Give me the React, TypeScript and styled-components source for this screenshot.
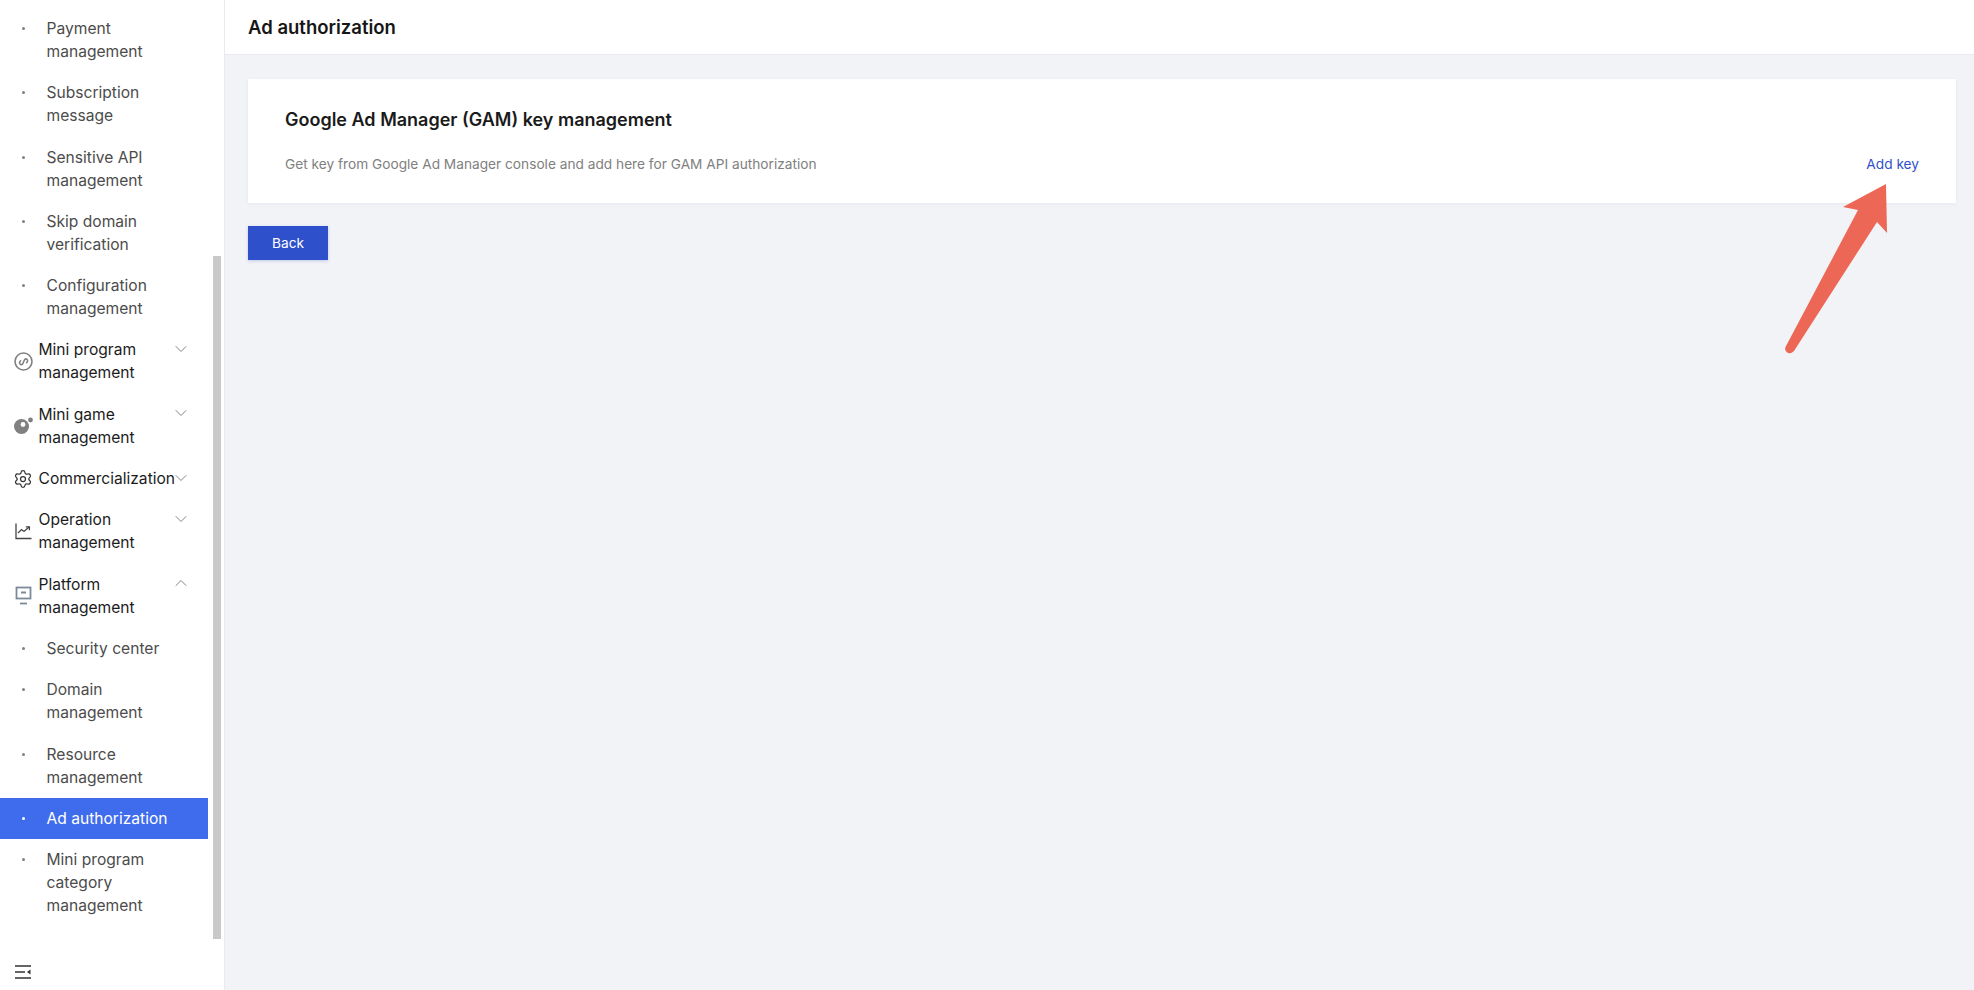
import React from "react";
import styled, { createGlobalStyle } from "styled-components";
import { ChevronDown, ChevronUp, Settings } from "lucide-react";

const GlobalStyle = createGlobalStyle`
    html, body {
        margin: 0;
        height: 100%;
        background: #f2f3f7;
        font-family: Inter, "Liberation Sans", sans-serif;
    }
`;

const Page = styled.div`
    display: flex;
    height: 990px;
    overflow: hidden;
    position: relative;
`;

const Sidebar = styled.aside`
    position: relative;
    display: flex;
    flex-direction: column;
    flex-shrink: 0;
    box-sizing: border-box;
    width: 225px;
    height: 100%;
    background: #fff;
    border-right: 1px solid #e9ebef;
`;

const NavList = styled.nav`
    flex: 1;
    width: 208px;
    padding-top: 8px;
`;

const ScrollThumb = styled.div`
    position: absolute;
    top: 256px;
    left: 213px;
    width: 8px;
    height: 683px;
    background: #c9c9c9;
`;

const ParentRow = styled.div`
    display: flex;
    align-items: center;
    padding: 9px 0 9.3px 13px;
    font-size: 15.6px;
    line-height: 23px;
    color: #1c1c1c;
`;

const IconSlot = styled.span`
    display: flex;
    justify-content: center;
    flex-shrink: 0;
    width: 20px;
    margin-right: 5.5px;
    color: #777;
`;

const ParentLabel = styled.span`
    flex-shrink: 0;
    width: 136px;
`;

const Caret = styled.span`
    display: flex;
    align-self: flex-start;
    align-items: center;
    justify-content: center;
    width: 12px;
    height: 23px;
    margin-top: -1px;
    color: #858585;

    svg {
        flex-shrink: 0;
    }
`;

const ChildRow = styled.a<{ $active?: boolean }>`
    display: flex;
    align-items: flex-start;
    padding: 9px 0 9.3px 22px;
    font-size: 15.6px;
    line-height: 23px;
    color: ${(p) => (p.$active ? "#fff" : "#4c4c4c")};
    background: ${(p) => (p.$active ? "#3e6cec" : "transparent")};
`;

const Dot = styled.i<{ $active?: boolean }>`
    flex-shrink: 0;
    width: 3px;
    height: 3px;
    margin: 10px 21.5px 0 0;
    border-radius: 50%;
    background: ${(p) => (p.$active ? "#fff" : "#808080")};
`;

const ChildLabel = styled.span`
    width: 140px;
`;

const Collapse = styled.div`
    display: flex;
    align-items: center;
    height: 36px;
    padding-left: 15px;
    color: #333;
`;

const Main = styled.main`
    flex: 1;
    min-width: 0;
`;

const Header = styled.header`
    display: flex;
    align-items: center;
    box-sizing: border-box;
    height: 55px;
    padding: 0 23px;
    background: #fff;
    border-bottom: 1px solid #e9ebef;
`;

const PageTitle = styled.h1`
    margin: 0;
    font-size: 18.5px;
    font-weight: 600;
    color: #161616;
`;

const Content = styled.div`
    padding: 24px 18px 0 23px;
`;

const Card = styled.section`
    box-sizing: border-box;
    height: 124px;
    padding: 30px 37px 0;
    background: #fff;
    box-shadow: 0 1px 4px rgba(40, 50, 80, 0.06);
`;

const CardTitle = styled.h2`
    margin: 0;
    font-size: 18px;
    line-height: 22px;
    font-weight: 600;
    color: #1a1a1a;
`;

const CardRow = styled.div`
    display: flex;
    justify-content: space-between;
    align-items: center;
    margin-top: 23px;
    font-size: 13.7px;
    line-height: 20px;
`;

const Description = styled.span`
    color: #808080;
`;

const AddKey = styled.a`
    color: #2f50cb;
`;

const BackButton = styled.button`
    display: block;
    width: 80px;
    height: 34px;
    margin-top: 23px;
    padding: 0;
    border: 0;
    background: #2f50cb;
    color: #fff;
    font-family: inherit;
    font-size: 13.7px;
    box-shadow: 0 1px 3px rgba(47, 80, 203, 0.25);
`;

const ArrowMark = styled.svg`
    position: absolute;
    top: 0;
    left: 0;
    pointer-events: none;
`;

const MiniProgramIcon = () => (
    <svg width="19" height="19" viewBox="0 0 19 19" fill="none" stroke="#808080">
        <circle cx="9.5" cy="9.5" r="8.5" strokeWidth="1.6" />
        <path d="M6.6 8.8l-.7.9c-1.2 1.8 1 3.8 2.7 2.4l2.1-4.6c1.5-1.6 3.8.5 2.6 2.3l-.7.9" strokeWidth="1.5" strokeLinecap="round" />
    </svg>
);

const MiniGameIcon = () => (
    <svg width="20" height="19" viewBox="0 0 20 19">
        <circle cx="8.5" cy="10.5" r="7.5" fill="#808080" />
        <circle cx="10" cy="8.5" r="2.4" fill="#fff" />
        <circle cx="17.5" cy="4" r="2.4" fill="#808080" />
    </svg>
);

const ChartIcon = () => (
    <svg width="17" height="17" viewBox="0 0 17 17" fill="none" stroke="#444" strokeWidth="1.3">
        <path d="M1 .5V15.5h15.5" />
        <path d="M3 10l3.5-3.5 2.5 2L14 4" />
        <path d="M10.8 3.8h3.6v3.4" />
    </svg>
);

const PlatformIcon = () => (
    <svg width="17" height="19" viewBox="0 0 17 19" fill="none" stroke="#7d8a99" strokeWidth="1.8">
        <rect x="1.5" y="1.5" width="14" height="11" />
        <path d="M6 6.5h5" strokeWidth="2" />
        <path d="M5 17.5h7" />
    </svg>
);

const CollapseIcon = () => (
    <svg width="16" height="14" viewBox="0 0 16 14" fill="none" stroke="#333" strokeWidth="1.4">
        <path d="M0 1h16M0 7h10M0 13h16" />
        <path d="M15.5 4.5v5L12 7z" fill="#333" stroke="none" />
    </svg>
);

type ParentItem = {
    kind: "parent";
    label: string;
    icon: React.ReactNode;
    open?: boolean;
};

type ChildItem = {
    kind: "child";
    label: string;
    active?: boolean;
};

const menu: (ParentItem | ChildItem)[] = [
    { kind: "child", label: "Payment management" },
    { kind: "child", label: "Subscription message" },
    { kind: "child", label: "Sensitive API management" },
    { kind: "child", label: "Skip domain verification" },
    { kind: "child", label: "Configuration management" },
    { kind: "parent", label: "Mini program management", icon: <MiniProgramIcon /> },
    { kind: "parent", label: "Mini game management", icon: <MiniGameIcon /> },
    { kind: "parent", label: "Commercialization", icon: <Settings size={20} strokeWidth={1.5} color="#333" /> },
    { kind: "parent", label: "Operation management", icon: <ChartIcon /> },
    { kind: "parent", label: "Platform management", icon: <PlatformIcon />, open: true },
    { kind: "child", label: "Security center" },
    { kind: "child", label: "Domain management" },
    { kind: "child", label: "Resource management" },
    { kind: "child", label: "Ad authorization", active: true },
    { kind: "child", label: "Mini program category management" },
];

export default function App() {
    return (
        <Page>
            <GlobalStyle />
            <Sidebar>
                <NavList>
                    {menu.map((item) =>
                        item.kind === "parent" ? (
                            <ParentRow key={item.label}>
                                <IconSlot>{item.icon}</IconSlot>
                                <ParentLabel>{item.label}</ParentLabel>
                                <Caret>
                                    {item.open
                                        ? <ChevronUp size={20} strokeWidth={1.2} />
                                        : <ChevronDown size={20} strokeWidth={1.2} />}
                                </Caret>
                            </ParentRow>
                        ) : (
                            <ChildRow key={item.label} $active={item.active}>
                                <Dot $active={item.active} />
                                <ChildLabel>{item.label}</ChildLabel>
                            </ChildRow>
                        )
                    )}
                </NavList>
                <Collapse>
                    <CollapseIcon />
                </Collapse>
                <ScrollThumb />
            </Sidebar>
            <Main>
                <Header>
                    <PageTitle>Ad authorization</PageTitle>
                </Header>
                <Content>
                    <Card>
                        <CardTitle>Google Ad Manager (GAM) key management</CardTitle>
                        <CardRow>
                            <Description>Get key from Google Ad Manager console and add here for GAM API authorization</Description>
                            <AddKey>Add key</AddKey>
                        </CardRow>
                    </Card>
                    <BackButton>Back</BackButton>
                </Content>
            </Main>
            <ArrowMark width="1974" height="990" viewBox="0 0 1974 990">
                <path
                    d="M1886 184L1843 207L1858 210L1785.5 347Q1784 351 1788 353Q1791 354 1794 351L1877 222L1887 233Z"
                    fill="#ec6756"
                />
            </ArrowMark>
        </Page>
    );
}
